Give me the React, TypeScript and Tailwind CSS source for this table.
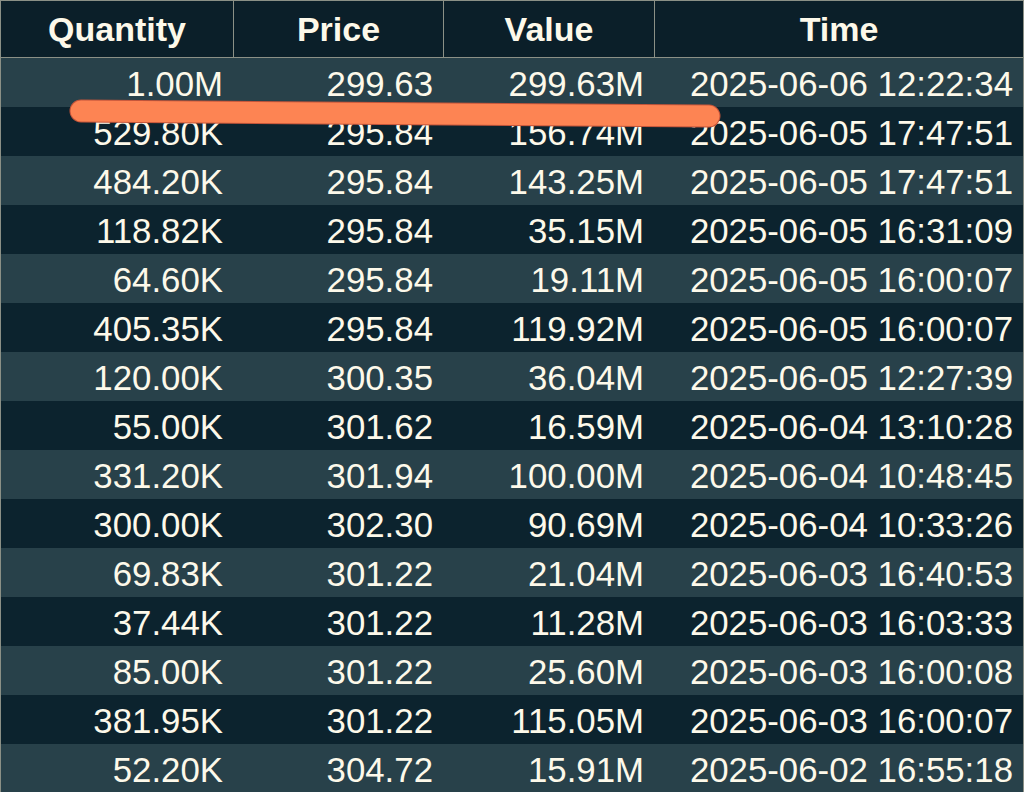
import React from "react";

const rows: [string, string, string, string][] = [
  ["1.00M", "299.63", "299.63M", "2025-06-06 12:22:34"],
  ["529.80K", "295.84", "156.74M", "2025-06-05 17:47:51"],
  ["484.20K", "295.84", "143.25M", "2025-06-05 17:47:51"],
  ["118.82K", "295.84", "35.15M", "2025-06-05 16:31:09"],
  ["64.60K", "295.84", "19.11M", "2025-06-05 16:00:07"],
  ["405.35K", "295.84", "119.92M", "2025-06-05 16:00:07"],
  ["120.00K", "300.35", "36.04M", "2025-06-05 12:27:39"],
  ["55.00K", "301.62", "16.59M", "2025-06-04 13:10:28"],
  ["331.20K", "301.94", "100.00M", "2025-06-04 10:48:45"],
  ["300.00K", "302.30", "90.69M", "2025-06-04 10:33:26"],
  ["69.83K", "301.22", "21.04M", "2025-06-03 16:40:53"],
  ["37.44K", "301.22", "11.28M", "2025-06-03 16:03:33"],
  ["85.00K", "301.22", "25.60M", "2025-06-03 16:00:08"],
  ["381.95K", "301.22", "115.05M", "2025-06-03 16:00:07"],
  ["52.20K", "304.72", "15.91M", "2025-06-02 16:55:18"],
];

export default function App() {
  return (
    <div
      className="relative w-[1024px] h-[792px] overflow-hidden bg-[#0c232e] text-[#fdf9ea]"
      style={{ fontFamily: '"Liberation Sans", Arial, sans-serif' }}
    >
      <div className="border border-[#8b9086] border-b-0">
        <div className="grid grid-cols-[232px_210px_211px_1fr] h-[57px] bg-[#0b1f29] border-b border-[#8b9086] text-[34px] font-bold">
          <div className="flex items-center justify-center">Quantity</div>
          <div className="flex items-center justify-center border-l border-[#8b9086]">Price</div>
          <div className="flex items-center justify-center border-l border-[#8b9086]">Value</div>
          <div className="flex items-center justify-center border-l border-[#8b9086]">Time</div>
        </div>
        {rows.map((r, i) => (
          <div
            key={i}
            className={`grid grid-cols-[232px_210px_211px_1fr] h-[49px] text-[34.8px] ${
              i % 2 === 0 ? "bg-[#28414a]" : "bg-[#0c232e]"
            }`}
          >
            <div className="flex items-center justify-end pr-[10px] pb-[2px]">{r[0]}</div>
            <div className="flex items-center justify-end pr-[10px] pb-[2px]">{r[1]}</div>
            <div className="flex items-center justify-end pr-[10px] pb-[2px]">{r[2]}</div>
            <div className="flex items-center justify-end pr-[10px] pb-[2px]">{r[3]}</div>
          </div>
        ))}
      </div>
      <svg
        className="absolute left-0 top-0 pointer-events-none"
        width="1024"
        height="792"
        viewBox="0 0 1024 792"
      >
        <path
          d="M81 111 L709 116"
          stroke="#c4553a"
          strokeWidth="23"
          strokeLinecap="round"
          fill="none"
        />
        <path
          d="M81 111 L709 116"
          stroke="#fd8453"
          strokeWidth="21"
          strokeLinecap="round"
          fill="none"
        />
      </svg>
    </div>
  );
}
